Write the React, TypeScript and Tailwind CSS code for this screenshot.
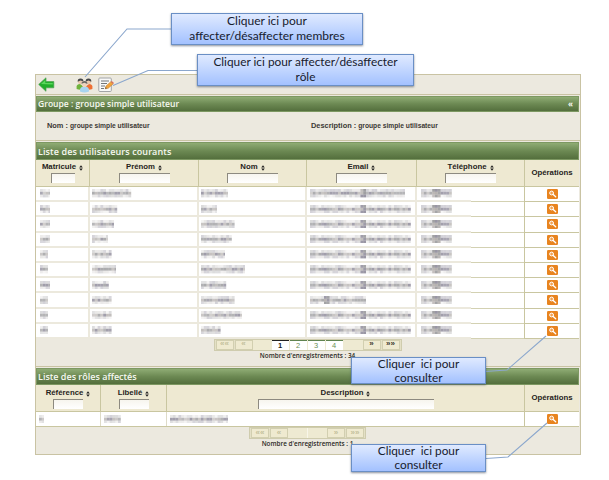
import type { ReactNode } from "react";

const SANS = "font-['Liberation_Sans',Arial,sans-serif]";
const TITLE = "font-['Open_Sans','Noto_Sans',sans-serif]";
const CALLOUT = "font-['Lato','Open_Sans',sans-serif]";

/* Anonymised cell value: a strip of small grey tiles. */
function Masked({ width, seed, dark = -1 }: { width: number; seed: number; dark?: number }) {
  const size = 2.8;
  const count = Math.max(2, Math.round(width / size));
  const tiles: ReactNode[] = [];
  for (let i = 0; i < count; i++) {
    for (let r = 0; r < 3; r++) {
      const n = Math.abs(Math.sin((i + 1) * 12.9898 + (r + 1) * 78.233 + seed * 37.719) * 43758.5453) % 1;
      const strong = dark >= 0 && Math.abs(i * size - dark) < 3;
      const base = r === 1 ? 0.3 : 0.06;
      const opacity = strong ? 0.4 + n * 0.25 : base + n * (r === 1 ? 0.3 : 0.22);
      tiles.push(
        <rect key={`${i}-${r}`} x={i * size} y={r * size} width={size} height={size}
          fill={n > 0.75 ? "#5f5a70" : n > 0.4 ? "#5c5c60" : "#6d6460"} opacity={opacity} />
      );
    }
  }
  return <svg width={width} height="8.4" className="block shrink-0 blur-[0.5px]" aria-hidden="true">{tiles}</svg>;
}

function Callout({ place, children }: { place: string; children: ReactNode }) {
  return (
    <div className={`absolute border border-[#6a8fc5] bg-linear-to-b from-[#e0eaff] to-[#a3c1ff] text-center text-[#17202e] shadow-[0_1px_2px_rgba(60,70,90,0.6)] ${CALLOUT} ${place}`}>
      {children}
    </div>
  );
}

function Bar({ title, height, text, extra }: { title: string; height: string; text: string; extra?: string }) {
  return (
    <div className={`flex items-center justify-between border border-[#7d9862] bg-linear-to-b from-[#8fac74] via-[#6c8953] to-[#546f3d] pr-[5px] pl-[1px] text-[#f6f8f0] ${TITLE} ${height}`}>
      <span className={`leading-none font-semibold whitespace-nowrap ${text}`}>{title}</span>
      {extra && <span className="text-[8px] leading-none font-bold">{extra}</span>}
    </div>
  );
}

function Sorter() {
  return (
    <svg width="4" height="6" viewBox="0 0 4 6" className="mt-[2px] ml-[3px] shrink-0">
      <path d="M2 .2 3.8 2.6H.2ZM2 5.8.2 3.4H3.8Z" fill="#222" />
    </svg>
  );
}

function Head({ label, input, pad = "pt-[3px]" }: { label: string; input: string; pad?: string }) {
  return (
    <div className={`flex flex-col items-center border-r border-[#c9c6a0] ${pad}`}>
      <div className="flex h-[8px] items-center text-[7.8px] leading-none font-bold text-[#262320]">
        {label}
        <Sorter />
      </div>
      <div className={`mt-[2px] h-[10px] border-t border-l border-[#8d8a80] bg-linear-to-b from-[#f7f5ee] to-white ${input}`} />
    </div>
  );
}

function Operations() {
  return <div className="flex items-center justify-center text-[7.8px] font-bold text-[#262320]">Opérations</div>;
}

function ViewIcon() {
  return (
    <svg width="11" height="10" viewBox="0 0 11 10">
      <rect width="11" height="10" rx="1.3" fill="#e8841f" />
      <circle cx="4.6" cy="4" r="1.9" fill="#f3a252" stroke="#fff" strokeWidth="1" />
      <path d="m6.2 5.5 2.5 2.3" stroke="#fff" strokeWidth="1.3" strokeLinecap="round" />
    </svg>
  );
}

const members = [
  [10, 40, 27, 95], [10, 26, 16, 101], [10, 22, 34, 101], [10, 16, 31, 101], [8, 20, 24, 101],
  [8, 24, 44, 101], [10, 17, 26, 101], [8, 20, 34, 57], [8, 20, 41, 101], [8, 20, 20, 101],
];

function MemberRow({ widths, index }: { widths: number[]; index: number }) {
  const cell = "flex items-center border-r-2 border-b-2 border-[#ece9dd] bg-white";
  return (
    <div className="grid h-[15.2px] grid-cols-[54px_109px_108px_110px_108px_54px]">
      <div className={`${cell} pl-[4px]`}><Masked width={widths[0]} seed={index * 5 + 1} /></div>
      <div className={`${cell} pl-[2px]`}><Masked width={widths[1]} seed={index * 5 + 2} /></div>
      <div className={`${cell} pl-[2px]`}><Masked width={widths[2]} seed={index * 5 + 3} /></div>
      <div className={`${cell} pl-[3px]`}><Masked width={widths[3]} seed={widths[3] === 101 ? 9 : index * 5 + 4} dark={widths[3] === 57 ? 16 : 51} /></div>
      <div className="flex border-r border-[#c9c6a0] bg-white">
        <div className="flex w-[54px] items-center border-b-2 border-[#ece9dd] pl-[4px]"><Masked width={31} seed={4} dark={14} /></div>
        <div className="flex-1 border-b border-[#d3d1b2]" />
      </div>
      <div className="flex items-center justify-center border-b border-[#c9c6a0] bg-white"><ViewIcon /></div>
    </div>
  );
}

function PageButton({ children, active = false }: { children: string; active?: boolean }) {
  return (
    <span className={`flex h-[10px] w-[18px] items-center justify-center border border-[#d2cfb0] bg-[#efead0] pb-[1px] text-[8px] leading-none font-bold ${active ? "text-[#3b382c]" : "text-[#c3bf9b]"}`}>
      {children}
    </span>
  );
}

function Count({ children }: { children: string }) {
  return <div className={`text-[6.35px] leading-none font-semibold whitespace-nowrap text-[#2b2926] ${TITLE}`}>{children}</div>;
}

function BackIcon() {
  return (
    <svg width="17" height="15" viewBox="0 0 17 15">
      <path d="M.7 7.4 8 .8v3.8h7.8v6.2H8v3.5Z" fill="#22ae2b" stroke="#4e9d50" strokeWidth=".7" />
      <path d="M3 7 7.3 3v3h7.4v1.4Z" fill="#5bd65c" />
    </svg>
  );
}

function UsersIcon() {
  return (
    <svg width="17" height="16" viewBox="0 0 17 16">
      <path d="M.6 12V9.5Q.8 7 4 7l3 2v3.5Q3 13 .6 12Z" fill="#6fb33c" />
      <path d="M16.4 12V9.5Q16.2 7 13 7l-3 2v3.5q4 .5 6.4-.5Z" fill="#ee7035" />
      <circle cx="4.5" cy="4.6" r="2.6" fill="#e9c8ae" />
      <circle cx="12.5" cy="4.6" r="2.6" fill="#e9c8ae" />
      <path d="M1.7 4.7Q1.4 1.5 4.6 1.5q2.9 0 2.8 2.8L4.3 3.4ZM9.7 4.5Q9.4 1.5 12.5 1.5q3 0 2.8 3.2L12.6 3.4Z" fill="#45484b" />
      <path d="M4 14.6v-2.2Q4.5 9.4 8.5 9.4t4.5 3v2.2q-4.5 1.8-9 0Z" fill="#a8d4f0" />
      <circle cx="8.5" cy="7.3" r="2.8" fill="#efd3bd" />
      <path d="M5.6 6.8Q5.4 4 8.5 4q3.1 0 2.9 3L8.4 5.7Z" fill="#6c6a67" />
    </svg>
  );
}

function EditIcon() {
  return (
    <svg width="17" height="16" viewBox="0 0 17 16">
      <rect x=".8" y="1" width="12.5" height="13.5" rx="1" fill="#f8f8f8" stroke="#a2a4a6" />
      <path d="M3 4h8M3 6.5h6M3 9h4M3 11.5h3" stroke="#72767a" strokeWidth="1.1" />
      <path d="m7.2 11.8.8-2.8 4.8-4.3 2.3 2.2-4.9 4.4Z" fill="#f2a33b" stroke="#b97831" strokeWidth=".5" />
      <path d="m12.8 4.7 1-.8 2.2 2.1-.9.9Z" fill="#dc705d" />
      <path d="m7.2 11.8.5-1.5 1.1 1Z" fill="#333" />
    </svg>
  );
}

export default function App() {
  return (
    <main className={`relative h-[480px] w-[609px] overflow-hidden bg-white pt-[74px] pl-[35px] ${SANS}`}>
      <div className="h-[381px] w-[546px] border border-[#c9c3a3] bg-[#ece9df]">
        <div className="flex h-[20px] items-center border-b border-[#c9c3a3] pl-[2px]">
          <BackIcon />
          <span className="ml-[21px] flex"><UsersIcon /></span>
          <span className="ml-[5px] flex"><EditIcon /></span>
        </div>
        <div className="mt-[1px] mr-[1px]">
          <Bar title="Groupe : groupe simple utilisateur" height="h-[16px]" text="text-[8.55px]" extra="«" />
        </div>
        <div className="flex h-[29px] items-center border-b border-[#c9c3a3] pl-[11px] text-[6.7px] font-bold text-[#3b3834]">
          <div className="w-[264px] whitespace-nowrap"><span className="text-[7.4px]">Nom : </span>groupe simple utilisateur</div>
          <div className="whitespace-nowrap"><span className="text-[7.4px]">Description : </span>groupe simple utilisateur</div>
        </div>

        <section className="h-[226px] border-b border-[#c9c3a3] pt-[1px] pr-[1px]">
          <Bar title="Liste des utilisateurs courants" height="h-[18px]" text="text-[9px] tracking-[0.1px]" />
          <div className="grid h-[27px] grid-cols-[54px_109px_108px_110px_108px_54px] border-b border-[#c9c6a0] bg-[#eee9d2]">
            <Head label="Matricule" input="w-[24px]" />
            <Head label="Prénom" input="w-[51px]" />
            <Head label="Nom" input="w-[51px]" />
            <Head label="Email" input="w-[51px]" />
            <Head label="Téléphone" input="w-[51px]" />
            <Operations />
          </div>
          {members.map((widths, i) => <MemberRow key={i} widths={widths} index={i} />)}
          <div className="flex flex-col items-center">
            <div className="flex h-[12px] w-[188px] items-center justify-between border border-[#cfccae] bg-[#e4e0c6] px-[1px]">
              <div className="flex gap-[1px]"><PageButton>««</PageButton><PageButton>«</PageButton></div>
              <div className="flex h-[10px] flex-1 bg-[#eeead2] pl-[19px] text-[7.5px] leading-[9px] text-[#6b9156]">
                <span className="w-[17px] border-t border-[#222] bg-white text-center font-bold text-[#222]">1</span>
                {["2", "3", "4"].map((n) => (
                  <span key={n} className="ml-[1px] w-[17px] border-t border-[#5f8350] bg-white text-center">{n}</span>
                ))}
              </div>
              <div className="flex gap-[1px]"><PageButton active>»</PageButton><PageButton active>»»</PageButton></div>
            </div>
            <div className="mt-[2px]"><Count>Nombre d'enregistrements : 34</Count></div>
          </div>
        </section>

        <section className="pt-[1px] pr-[1px]">
          <Bar title="Liste des rôles affectés" height="h-[17px]" text="text-[9px]" />
          <div className="grid h-[27px] grid-cols-[65px_66px_358px_54px] border-b border-[#c9c6a0] bg-[#eee9d2]">
            <Head label="Référence" input="w-[30px]" pad="pt-[4px]" />
            <Head label="Libellé" input="w-[30px]" pad="pt-[4px]" />
            <Head label="Description" input="w-[176px]" pad="pt-[4px]" />
            <Operations />
          </div>
          <div className="grid h-[15px] grid-cols-[65px_66px_358px_54px] border-b border-[#c9c6a0] bg-white">
            <div className="flex items-center border-r border-[#dedbc8] pl-[3px]"><Masked width={5} seed={52} /></div>
            <div className="flex items-center border-r border-[#dedbc8] pl-[3px]"><Masked width={17} seed={53} /></div>
            <div className="flex items-center border-r border-[#c9c6a0] pl-[3px]"><Masked width={58} seed={54} /></div>
            <div className="flex items-center justify-center"><ViewIcon /></div>
          </div>
          <div className="flex flex-col items-center">
            <div className="flex h-[12px] w-[117px] items-center justify-between border border-[#cfccae] bg-[#e4e0c6] px-[1px]">
              <div className="flex gap-[1px]"><PageButton>««</PageButton><PageButton>«</PageButton></div>
              <div className="flex h-[10px] flex-1 justify-center bg-[#eeead2]"><span className="w-px bg-[#f8f6e9]" /></div>
              <div className="flex gap-[1px]"><PageButton>»</PageButton><PageButton>»»</PageButton></div>
            </div>
            <div className="mt-[2px]"><Count>Nombre d'enregistrements : 1</Count></div>
          </div>
        </section>
      </div>

      <svg className="absolute inset-0" width="609" height="480" fill="none" stroke="#8ba7cd" strokeWidth="1.1">
        <path d="M171 29H127L85 77M197 70.5H148L113 85.5M485 371.5 507 370 546 336M486 458.5 508 457 547 423" />
      </svg>
      <Callout place="top-[13px] left-[171px] h-[32px] w-[192px] text-[12px] leading-[14.5px]">
        Cliquer ici pour<br />affecter/désaffecter membres
      </Callout>
      <Callout place="top-[54px] left-[197px] h-[32px] w-[217px] text-[11.85px] leading-[14.5px]">
        Cliquer ici pour affecter/désaffecter<br />rôle
      </Callout>
      <Callout place="top-[357px] left-[351px] h-[27px] w-[135px] text-[11.8px] leading-[14px] whitespace-pre">
        <p className="-mt-[1px]">{"Cliquer  ici pour"}<br />consulter</p>
      </Callout>
      <Callout place="top-[444px] left-[351px] h-[28px] w-[135px] text-[11.8px] leading-[14px] whitespace-pre">
        <p className="-mt-[1px]">{"Cliquer  ici pour"}<br />consulter</p>
      </Callout>
    </main>
  );
}
